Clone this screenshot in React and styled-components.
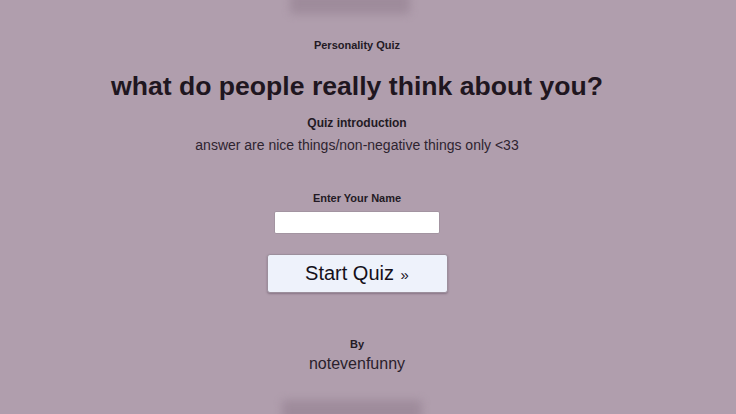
import React, { useState } from 'react';
import styled, { createGlobalStyle } from 'styled-components';

const GlobalStyle = createGlobalStyle`
    html, body {
        margin: 0;
        padding: 0;
        background: #b09ead;
    }
    body {
        font-family: "Liberation Sans", Arial, sans-serif;
        color: #231a24;
    }
`;

const Page = styled.div`
    position: relative;
    width: 736px;
    height: 414px;
    overflow: hidden;
    background: #b09ead;
`;

// soft shadows peeking in at the top and bottom edges
const Shade = styled.div`
    position: absolute;
    left: ${(p) => p.left}px;
    width: ${(p) => p.width}px;
    height: 22px;
    ${(p) => (p.bottom ? 'bottom: -8px;' : 'top: -8px;')}
    background: #9a8797;
    filter: blur(5px);
    opacity: 0.8;
`;

const Main = styled.main`
    display: flex;
    flex-direction: column;
    align-items: center;
    width: 714px;
    padding-top: 38px;
`;

const Kicker = styled.div`
    font-size: 11px;
    font-weight: 700;
    line-height: 14px;
`;

const Title = styled.h1`
    margin: 19px 0 0;
    font-size: 26.6px;
    font-weight: 700;
    line-height: 30px;
    color: #1f1620;
`;

const SubTitle = styled.h2`
    margin: 14px 0 0;
    font-size: 12px;
    font-weight: 700;
    line-height: 16px;
`;

const Intro = styled.p`
    margin: 5px 0 0;
    font-size: 14px;
    line-height: 18px;
    color: #2e2430;
`;

const Label = styled.label`
    margin-top: 37px;
    font-size: 11px;
    font-weight: 700;
    line-height: 14px;
`;

const NameInput = styled.input`
    margin-top: 6px;
    box-sizing: border-box;
    width: 166px;
    height: 23px;
    border: 1px solid #a394a1;
    border-radius: 2px;
    background: #ffffff;
    outline: none;
`;

const StartButton = styled.button`
    margin-top: 20px;
    width: 181px;
    height: 39px;
    border: 1px solid #9c8f9c;
    border-radius: 3px;
    background: #eef2fb;
    box-shadow: 0 1px 2px rgba(60, 40, 60, 0.35);
    font-family: "Liberation Sans", Arial, sans-serif;
    font-size: 20px;
    color: #15101a;
    cursor: pointer;
    span {
        font-size: 15px;
        margin-left: 1px;
    }
`;

const Byline = styled.div`
    margin-top: 44px;
    font-size: 11px;
    font-weight: 700;
    line-height: 14px;
`;

const Author = styled.div`
    margin-top: 3px;
    font-size: 16px;
    line-height: 20px;
    color: #2a212c;
`;

export default function App() {

    const [name, setName] = useState('');

    return (
        <Page>
            <GlobalStyle />
            <Shade left={290} width={120} />
            <Shade bottom left={282} width={140} />
            <Main>
                <Kicker>Personality Quiz</Kicker>
                <Title>what do people really think about you?</Title>
                <SubTitle>Quiz introduction</SubTitle>
                <Intro>answer are nice things/non-negative things only &lt;33</Intro>
                <Label htmlFor="name">Enter Your Name</Label>
                <NameInput id="name" value={name} onChange={(e) => setName(e.target.value)} />
                <StartButton>Start Quiz <span>»</span></StartButton>
                <Byline>By</Byline>
                <Author>notevenfunny</Author>
            </Main>
        </Page>
    )
}
